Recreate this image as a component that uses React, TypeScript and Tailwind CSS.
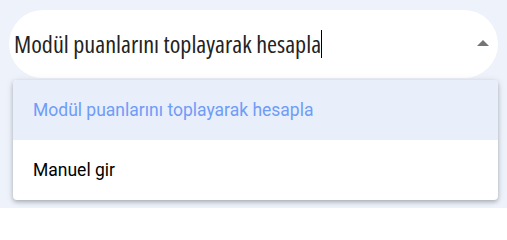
import React from "react";

export default function App() {
  return (
    <div className="relative w-[507px] h-[208px] bg-[#eef2fb] pt-[10px] px-[9px] overflow-hidden">
      <div className="flex items-center h-[68px] rounded-full bg-white pl-[5px] pr-[8px]">
        <div className="flex items-center flex-1 text-[24.2px] text-[#232323] font-stretch-condensed" style={{ fontFamily: '"Open Sans", sans-serif' }}>
          <span>Modül puanlarını toplayarak hesapla</span>
          <span className="inline-block w-px h-[28px] bg-black" />
        </div>
        <svg width="14" height="8" viewBox="0 0 14 8" className="mb-[2px]">
          <polygon points="1,7 7,1 13,7" fill="#757575" />
        </svg>
      </div>
      <div
        className="absolute left-[13px] top-[80px] w-[485px] rounded-[4px] bg-white overflow-hidden shadow-[0_2px_4px_rgba(0,0,0,0.25),0_1px_10px_rgba(0,0,0,0.08)]"
        style={{ fontFamily: "Roboto, sans-serif" }}
      >
        <div className="h-[60px] flex items-center pl-[20px] bg-[#e8eefa] text-[#6f9cf7] text-[17.5px]">
          Modül puanlarını toplayarak hesapla
        </div>
        <div className="h-[60px] flex items-center pl-[20px] text-black text-[17.5px]">Manuel gir</div>
      </div>
    </div>
  );
}
